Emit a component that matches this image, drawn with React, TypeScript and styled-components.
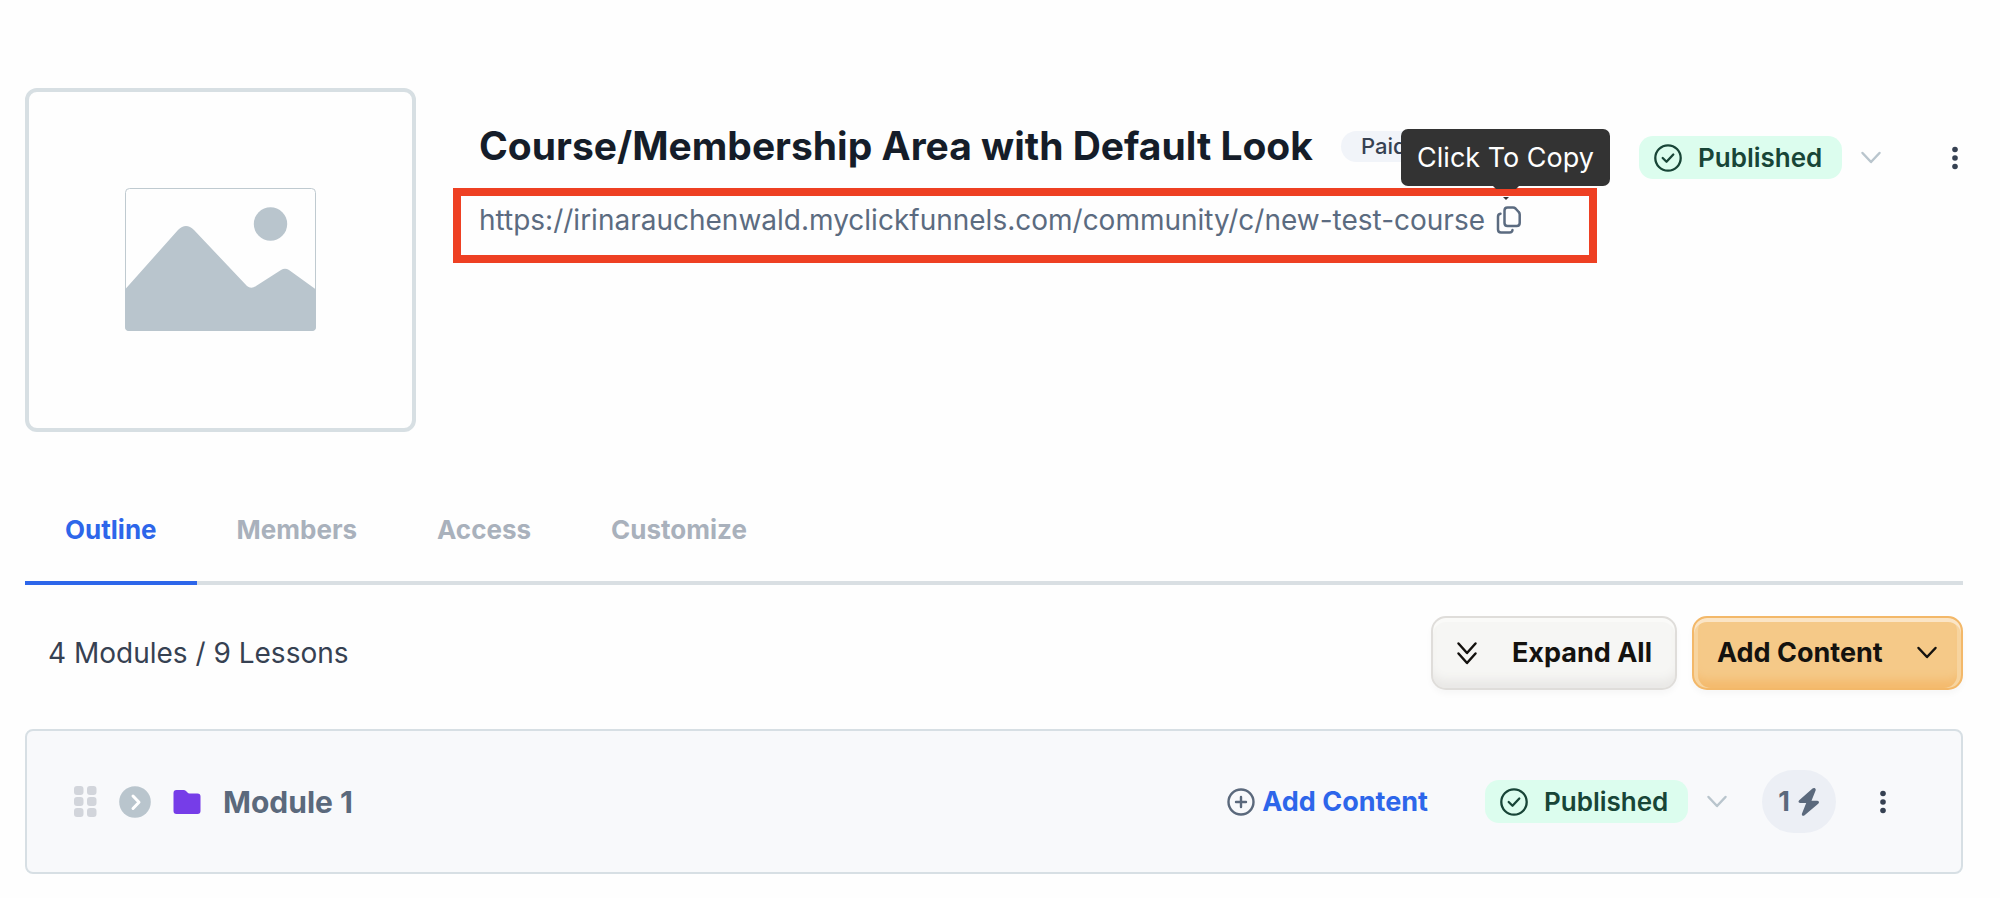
import React from 'react';
import styled, { createGlobalStyle } from 'styled-components';

const GlobalStyle = createGlobalStyle`
  *, *::before, *::after { box-sizing: border-box; }
  body {
    margin: 0;
    background: #fefefe;
    color: #364152;
    font-family: Inter, "Liberation Sans", sans-serif;
  }
  button { font-family: inherit; cursor: pointer; }
  svg { display: block; flex: none; }
`;

const Page = styled.main`
  padding: 88px 37px 24px 25px;
`;

const Header = styled.header`
  display: flex;
  align-items: flex-start;
`;

const Cover = styled.div`
  display: flex;
  flex: none;
  align-items: center;
  justify-content: center;
  width: 391px;
  height: 344px;
  padding-bottom: 1px;
  border: 4px solid #d7dfe3;
  border-radius: 12px;
`;

const Details = styled.div`
  flex: 1;
  min-width: 0;
  padding: 36px 0 0 37px;
`;

const TitleRow = styled.div`
  display: flex;
  align-items: center;
  height: 44px;
  padding-left: 26px;
  gap: 28px;
`;

const Title = styled.h1`
  margin: 0;
  color: #151d29;
  font-size: 39px;
  line-height: 44px;
  font-weight: 700;
  white-space: nowrap;
`;

const PriceTag = styled.span`
  padding: 0 20px;
  border-radius: 16px;
  background: #f1f4f9;
  font-size: 22px;
  line-height: 31px;
  font-weight: 500;
`;

const UrlBox = styled.div`
  display: flex;
  align-items: center;
  width: fit-content;
  min-width: 1144px;
  height: 75px;
  margin-top: 20px;
  padding: 0 18px 12px;
  border: 8px solid #ee4023;
  gap: 11px;
`;

const CourseUrl = styled.a`
  color: #5b6b80;
  font-size: 28px;
  line-height: 36px;
  text-decoration: none;
  white-space: nowrap;
`;

const CopyAnchor = styled.span`
  position: relative;
  display: flex;
`;

const IconButton = styled.button`
  display: flex;
  align-items: center;
  justify-content: center;
  padding: 0;
  border: 0;
  background: none;
`;

const Tooltip = styled.span`
  position: absolute;
  right: -88px;
  bottom: 48px;
  width: 209px;
  border-radius: 7px;
  background: #333;
  color: #fff;
  font-size: 27px;
  line-height: 57px;
  text-align: center;
  white-space: nowrap;
`;

const TooltipStem = styled.svg`
  position: absolute;
  left: 92px;
  top: 57px;
`;

const TooltipTip = styled.svg`
  position: absolute;
  left: 102px;
  top: 68px;
`;

const HeaderActions = styled.div`
  display: flex;
  align-items: center;
  padding: 48px 4px 0 0;
  gap: 69px;
`;

const StatusGroup = styled.div`
  display: flex;
  align-items: center;
  gap: 18px;
`;

const StatusBadge = styled.span`
  display: flex;
  align-items: center;
  width: 203px;
  height: 43px;
  padding-left: 15px;
  border-radius: 14px;
  background: #dcfdee;
  color: #184537;
  font-size: 26px;
  line-height: 43px;
  font-weight: 600;
  gap: 16px;
`;

const Tabs = styled.nav`
  display: flex;
  height: 97px;
  margin-top: 56px;
  border-bottom: 4px solid #d9dfe3;
`;

const Tab = styled.a<{ $active?: boolean }>`
  height: 97px;
  padding: 0 40px;
  border-bottom: 4px solid ${p => (p.$active ? '#2d66ea' : 'transparent')};
  color: ${p => (p.$active ? '#2d66ea' : '#a9b1bc')};
  font-size: 26px;
  line-height: 84px;
  font-weight: 700;
  text-decoration: none;
`;

const Toolbar = styled.div`
  display: flex;
  align-items: center;
  margin-top: 31px;
  gap: 15px;
`;

const Summary = styled.p`
  margin: 0 auto 0 0;
  padding-left: 23px;
  font-size: 28px;
  line-height: 36px;
`;

const ToolButton = styled.button<{ $primary?: boolean }>`
  display: flex;
  align-items: center;
  justify-content: space-between;
  width: ${p => (p.$primary ? '271px' : '246px')};
  height: 74px;
  padding: 0 23px;
  border: 2px solid ${p => (p.$primary ? '#f3b869' : '#dfddda')};
  border-radius: 15px;
  background: ${p => (p.$primary ? '#f5c988' : '#f6f6f4')};
  box-shadow: ${p =>
    p.$primary
      ? 'inset 0 4px 0 #fbe5c6, inset 4px 0 0 #f7d49f, inset -4px 0 0 #f7d49f, inset 0 -12px 10px -4px #f4ba6d, 0 4px 6px rgba(0, 0, 0, 0.03)'
      : 'inset 0 4px 0 #fafaf8, inset 0 -12px 10px -4px #e9e8e6, 0 4px 6px rgba(0, 0, 0, 0.03)'};
  color: #14120f;
  font-size: 27px;
  line-height: 36px;
  font-weight: 700;
  white-space: nowrap;
`;

const ModuleCard = styled.section`
  display: flex;
  align-items: center;
  height: 145px;
  margin-top: 39px;
  padding: 0 74px 0 47px;
  border: 2px solid #d7dfe4;
  border-radius: 8px;
  background: #f8f9fb;
`;

const ModuleLead = styled.div`
  display: flex;
  align-items: center;
  margin-right: auto;
  gap: 22px;
`;

const ModuleName = styled.h2`
  margin: 0;
  color: #5b697c;
  font-size: 30px;
  line-height: 40px;
  font-weight: 700;
`;

const AddLink = styled.button`
  display: flex;
  align-items: center;
  margin-right: 57px;
  padding: 0;
  border: 0;
  background: none;
  color: #2d66ea;
  font-size: 27px;
  line-height: 36px;
  font-weight: 700;
  gap: 7px;
`;

const Automations = styled.button`
  display: flex;
  align-items: center;
  justify-content: center;
  width: 74px;
  height: 63px;
  margin: 0 43px 0 34px;
  padding: 0;
  border: 0;
  border-radius: 32px;
  background: #eceff5;
  color: #5b697c;
  font-size: 27px;
  font-weight: 700;
  gap: 8px;
`;

const ImagePlaceholder = () => (
  <svg width="191" height="143" viewBox="0 0 191 143" aria-hidden="true">
    <rect x="0.5" y="0.5" width="190" height="142" rx="4" fill="#fefefe" stroke="#bfcad0" />
    <circle cx="145.500" cy="36" r="16.700" fill="#b9c5cd" />
    <path
      d="M0 101.500 53 42Q61 34 69 42L122 98Q126 101.500 131 98L156 82Q160 79.500 164 82L191 101.500V139Q191 143 187 143H4Q0 143 0 139Z"
      fill="#b9c5cd"
    />
  </svg>
);

const CopyIcon = () => (
  <svg width="26" height="28" viewBox="0 0 26 28" fill="none" stroke="#5b6b80" strokeWidth="2.500" strokeLinejoin="round" strokeLinecap="round" aria-hidden="true">
    <path d="M11.500 1.500H17Q18.500 1.500 19.500 2.500L22.700 6Q23.700 7 23.700 8.500V17Q23.700 20 20.700 20H11.500Q8.500 20 8.500 17V4.500Q8.500 1.500 11.500 1.500Z" />
    <path d="M4.500 7.800Q2 8.200 2 10.800V23.500Q2 26.500 5 26.500H13.500Q16.300 26.500 16.500 24" />
  </svg>
);

const CheckCircle = () => (
  <svg width="28" height="28" viewBox="0 0 28 28" fill="none" stroke="#184537" strokeWidth="2.300" strokeLinecap="round" strokeLinejoin="round" aria-hidden="true">
    <circle cx="14" cy="14" r="12.700" />
    <path d="M8.700 14 12.500 17.700 19.300 10.500" />
  </svg>
);

const PlusCircle = () => (
  <svg width="28" height="28" viewBox="0 0 28 28" fill="none" stroke="#5b697c" strokeWidth="2.400" strokeLinecap="round" aria-hidden="true">
    <circle cx="14" cy="14" r="12.500" />
    <path d="M14 9V19M9 14H19" />
  </svg>
);

const ChevronDown = ({ color }: { color: string }) => (
  <svg width="22" height="14" viewBox="0 0 22 14" fill="none" stroke={color} strokeWidth="2.500" strokeLinecap="round" strokeLinejoin="round" aria-hidden="true">
    <path d="M2.500 2 11 11 19.500 2" />
  </svg>
);

const DoubleChevron = () => (
  <svg width="22" height="24" viewBox="0 0 22 24" fill="none" stroke="#14120f" strokeWidth="2.500" strokeLinecap="round" strokeLinejoin="round" aria-hidden="true">
    <path d="M2.500 2.500 11 12 19.500 2.500M2.500 12.500 11 22 19.500 12.500" />
  </svg>
);

const Dots = () => (
  <svg width="8" height="24" viewBox="0 0 8 24" fill="#364152" aria-hidden="true">
    <circle cx="4" cy="3.500" r="2.800" />
    <circle cx="4" cy="12" r="2.800" />
    <circle cx="4" cy="20.500" r="2.800" />
  </svg>
);

const DragHandle = () => (
  <svg width="23" height="32" viewBox="0 0 23 32" fill="#d2d5db" aria-hidden="true">
    {[0, 11, 22].map(y =>
      [0, 13].map(x => <rect key={`${x}-${y}`} x={x} y={y} width="9.500" height="9" rx="3" />),
    )}
  </svg>
);

const ExpandIcon = () => (
  <svg width="32" height="32" viewBox="0 0 32 32" fill="none" aria-hidden="true">
    <circle cx="16" cy="16" r="15.800" fill="#b9c5cd" />
    <path d="M14 10 20 16.300 14 22.500" stroke="#fff" strokeWidth="3" strokeLinecap="round" strokeLinejoin="round" />
  </svg>
);

const FolderIcon = () => (
  <svg width="28" height="24" viewBox="0 0 28 24" fill="#763de8" aria-hidden="true">
    <path d="M3.500 0H10.500Q12 0 13 1L14.500 2.500Q15.200 3.400 16.500 3.400H24.500Q27.500 3.400 27.500 6.500V21Q27.500 24 24.500 24H3.500Q.5 24 .5 21V3Q.5 0 3.500 0Z" />
  </svg>
);

const BoltIcon = () => (
  <svg width="22" height="28" viewBox="0 0 22 28" fill="#5b697c" aria-hidden="true">
    <path d="M14.500.6 1.200 12.200C0 13.300.4 15 2.200 15H8.200L4 25.600C3.300 27.500 5.200 28.500 6.600 27.300L20.200 15.800C21.600 14.600 21 12.700 19.300 12.700H13.500L17.600 2.400C18.300.5 16-.7 14.500.6Z" />
  </svg>
);

const Status = ({ label }: { label: string }) => (
  <StatusGroup>
    <StatusBadge>
      <CheckCircle />
      {label}
    </StatusBadge>
    <IconButton type="button" aria-label="Change status">
      <ChevronDown color="#b9c5cd" />
    </IconButton>
  </StatusGroup>
);

const TABS = ['Outline', 'Members', 'Access', 'Customize'];

export default function App() {
  return (
    <>
      <GlobalStyle />
      <Page>
        <Header>
          <Cover>
            <ImagePlaceholder />
          </Cover>
          <Details>
            <TitleRow>
              <Title>Course/Membership Area with Default Look</Title>
              <PriceTag>Paid</PriceTag>
            </TitleRow>
            <UrlBox>
              <CourseUrl href="#course">https://irinarauchenwald.myclickfunnels.com/community/c/new-test-course</CourseUrl>
              <CopyAnchor>
                <IconButton type="button" aria-label="Copy course link">
                  <CopyIcon />
                </IconButton>
                <Tooltip role="tooltip">
                  Click To Copy
                  <TooltipStem width="26" height="3" viewBox="0 0 26 3" aria-hidden="true">
                    <path d="M0 0H26L23 3H3Z" fill="#333" />
                  </TooltipStem>
                  <TooltipTip width="6" height="3" viewBox="0 0 6 3" aria-hidden="true">
                    <path d="M0 0H6L3 3Z" fill="#333" />
                  </TooltipTip>
                </Tooltip>
              </CopyAnchor>
            </UrlBox>
          </Details>
          <HeaderActions>
            <Status label="Published" />
            <IconButton type="button" aria-label="Course options">
              <Dots />
            </IconButton>
          </HeaderActions>
        </Header>

        <Tabs aria-label="Course sections">
          {TABS.map((name, i) => (
            <Tab key={name} href={`#${name.toLowerCase()}`} $active={i === 0} aria-current={i === 0 ? 'page' : undefined}>
              {name}
            </Tab>
          ))}
        </Tabs>

        <Toolbar>
          <Summary>4 Modules / 9 Lessons</Summary>
          <ToolButton type="button">
            <DoubleChevron />
            Expand All
          </ToolButton>
          <ToolButton type="button" $primary>
            Add Content
            <ChevronDown color="#14120f" />
          </ToolButton>
        </Toolbar>

        <ModuleCard>
          <ModuleLead>
            <DragHandle />
            <IconButton type="button" aria-label="Expand module">
              <ExpandIcon />
            </IconButton>
            <FolderIcon />
            <ModuleName>Module 1</ModuleName>
          </ModuleLead>
          <AddLink type="button">
            <PlusCircle />
            Add Content
          </AddLink>
          <Status label="Published" />
          <Automations type="button" aria-label="1 automation">
            1
            <BoltIcon />
          </Automations>
          <IconButton type="button" aria-label="Module options">
            <Dots />
          </IconButton>
        </ModuleCard>
      </Page>
    </>
  );
}
